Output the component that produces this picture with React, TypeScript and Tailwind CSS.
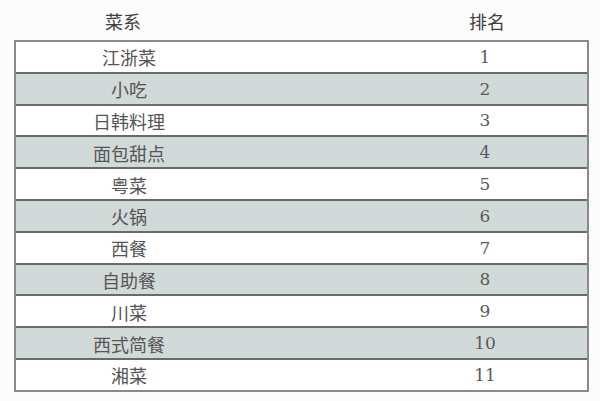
import React from "react";

const rows: [string, string][] = [
  ["江浙菜", "1"],
  ["小吃", "2"],
  ["日韩料理", "3"],
  ["面包甜点", "4"],
  ["粤菜", "5"],
  ["火锅", "6"],
  ["西餐", "7"],
  ["自助餐", "8"],
  ["川菜", "9"],
  ["西式简餐", "10"],
  ["湘菜", "11"],
];

const cjk = { fontFamily: '"Noto Sans CJK SC", "Noto Sans", sans-serif' };
const serif = { fontFamily: '"DejaVu Serif", "Liberation Serif", serif' };

export default function App() {
  return (
    <div className="w-[600px] h-[401px] bg-[#fcfcfc] overflow-hidden">
      <div className="flex h-[40px] pl-[14px] pr-[11px] items-center text-[18px] text-[#3f3f3f]" style={cjk}>
        <div className="w-[218px] text-center pt-[3px]">菜系</div>
        <div className="flex-1" />
        <div className="w-[204px] text-center pt-[3px]">排名</div>
      </div>
      <div className="ml-[14px] w-[575px] border-2 border-[#8a8a8a]">
        {rows.map(([name, rank], i) => (
          <div
            key={name}
            className={`flex h-[29.8px] items-center ${i > 0 ? "border-t-2 border-[#6a6a6a]" : ""} ${
              i % 2 === 1 ? "bg-[#d2d9d9]" : "bg-white"
            } box-content`}
          >
            <div className="w-[226px] text-center text-[18px] leading-none text-[#555] pt-[1px]" style={cjk}>
              {name}
            </div>
            <div className="flex-1" />
            <div className="w-[204px] text-center text-[17px] leading-none text-[#5a5a5a] pt-[1px]" style={serif}>
              {rank}
            </div>
          </div>
        ))}
      </div>
    </div>
  );
}
